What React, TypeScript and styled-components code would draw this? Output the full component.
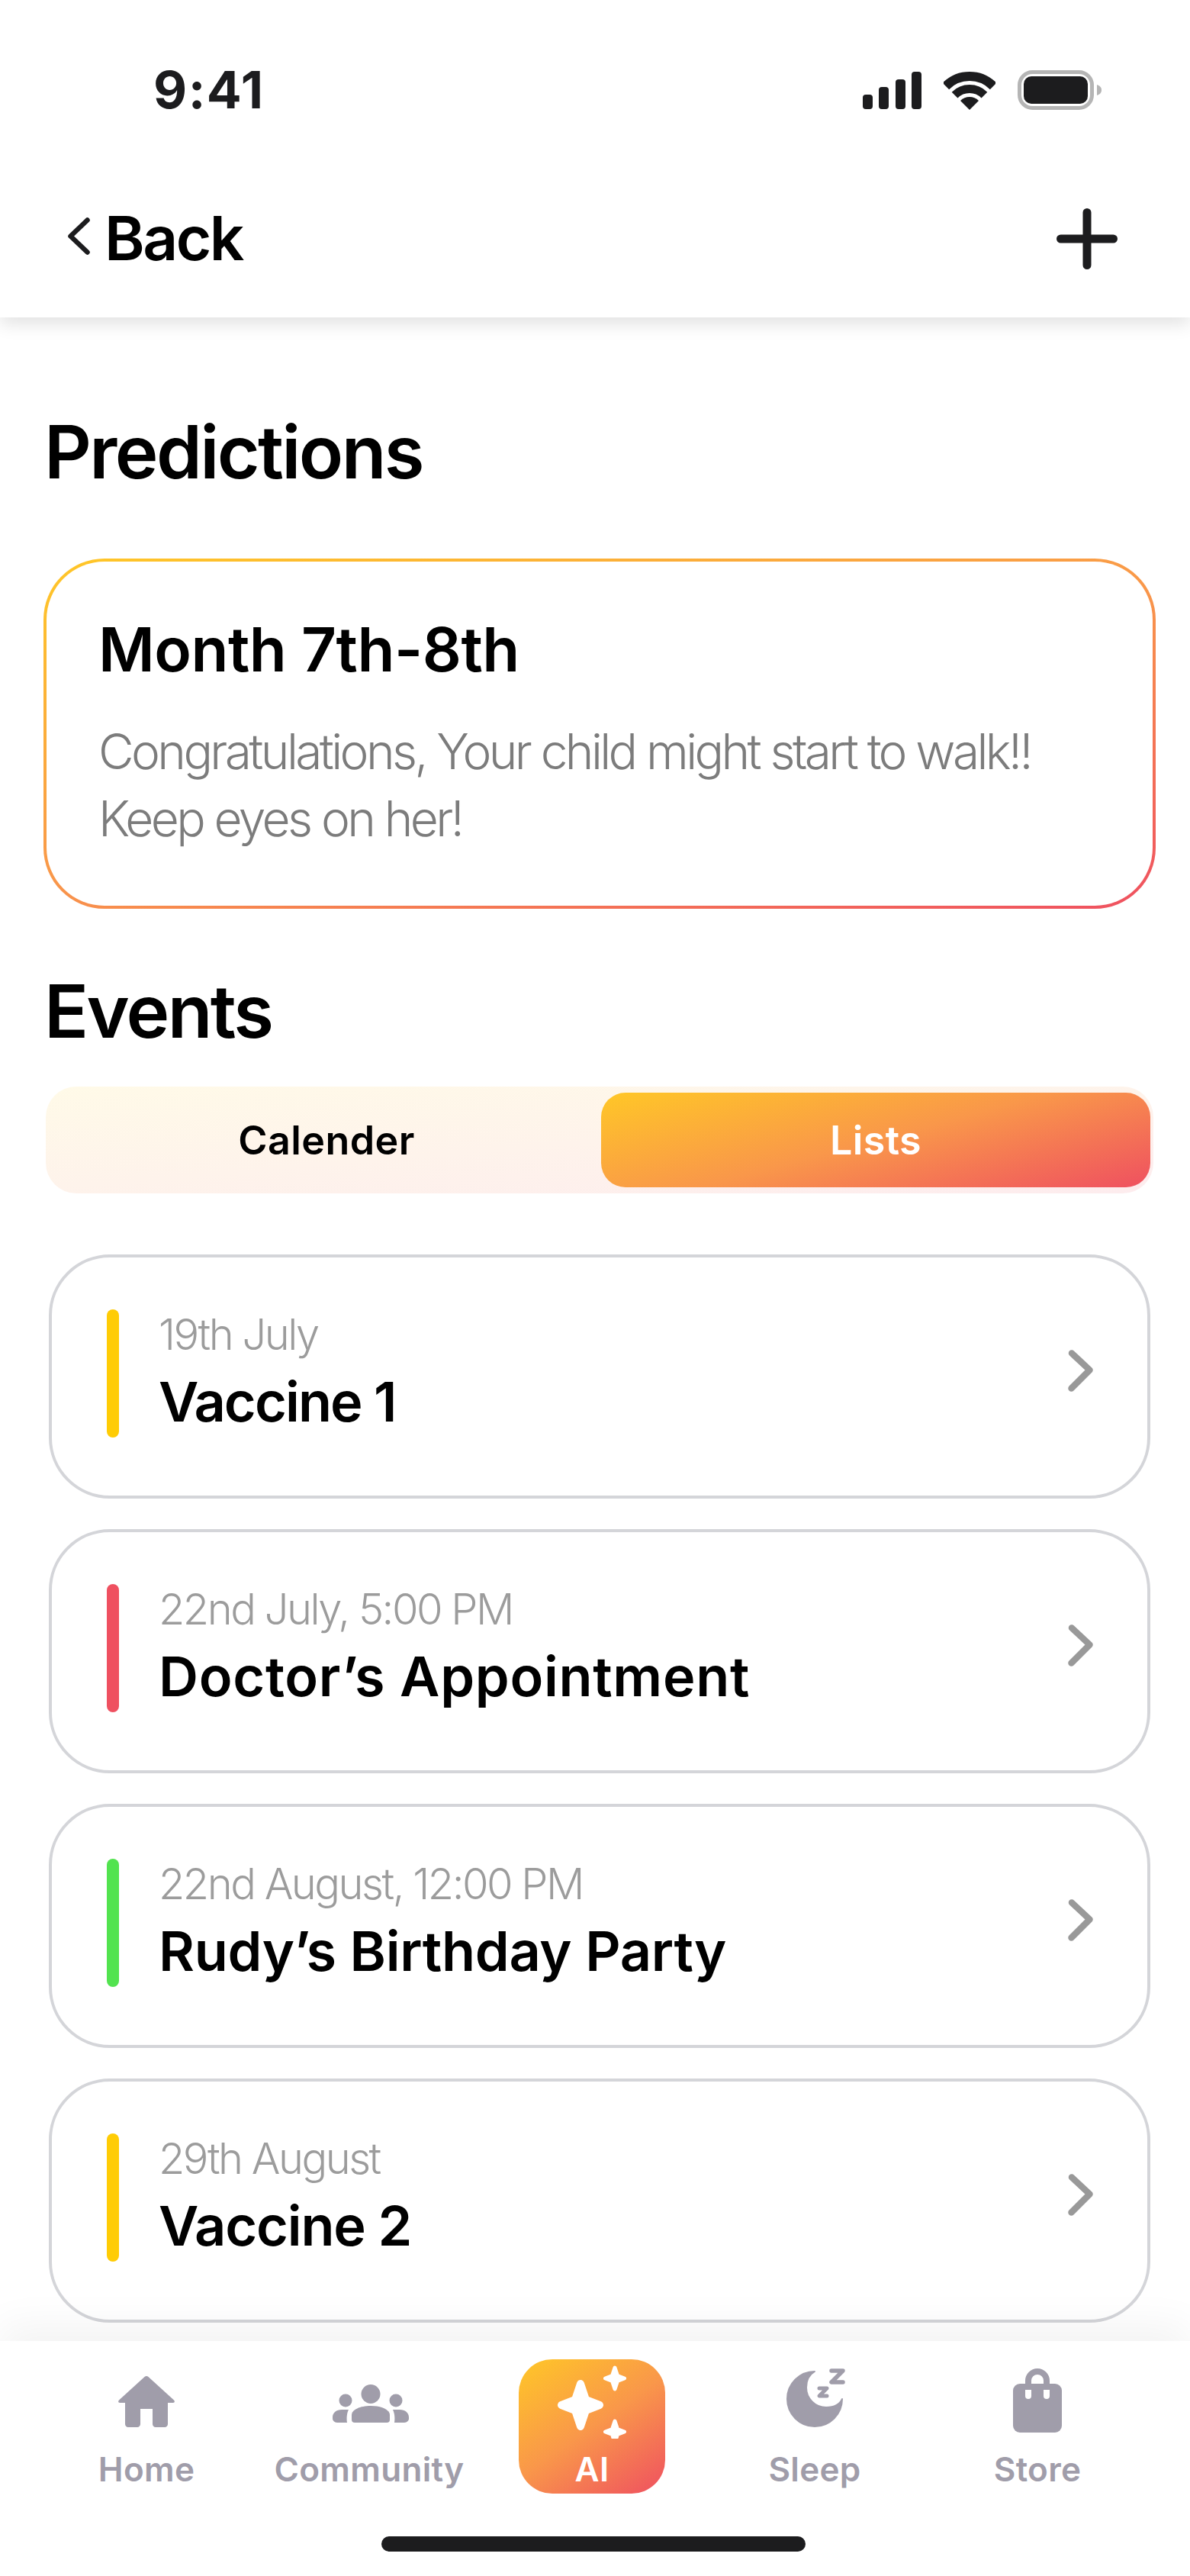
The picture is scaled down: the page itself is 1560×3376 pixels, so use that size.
import React from "react";
import styled, { createGlobalStyle } from "styled-components";

const GlobalStyle = createGlobalStyle`
  html, body { margin: 0; padding: 0; background: #fff; }
  body { font-family: Inter, "Liberation Sans", sans-serif; }
  * { box-sizing: border-box; }
`;

const GRADIENT = "linear-gradient(165deg, #ffc727 0%, #f9974a 50%, #ef5060 100%)";
const GRADIENT_SQUARE = "linear-gradient(145deg, #ffc727 0%, #f9974a 50%, #ef5060 100%)";

const Page = styled.div`
  width: 1560px;
  height: 3376px;
  overflow: hidden;
  background: #fff;
  display: flex;
  flex-direction: column;
  font-family: Inter, "Liberation Sans", sans-serif;
  color: #000;
`;

const Header = styled.header`
  height: 416px;
  flex: none;
  background: #fff;
  box-shadow: 0 8px 22px rgba(0, 0, 0, 0.12);
`;

const StatusBar = styled.div`
  height: 176px;
  padding: 92px 116px 0 201px;
  display: flex;
  justify-content: space-between;
  align-items: flex-start;
`;

const Time = styled.span`
  font-size: 68px;
  font-weight: 700;
  line-height: 50px;
  letter-spacing: 1.5px;
  color: #1c1c1e;
`;

const StatusIcons = styled.div`
  display: flex;
  gap: 29px;
  align-items: flex-start;
`;

const NavRow = styled.div`
  height: 240px;
  padding: 34px 95px 0 89px;
  display: flex;
  justify-content: space-between;
  align-items: center;
`;

const BackLink = styled.div`
  display: flex;
  align-items: center;
  gap: 19px;
  padding-bottom: 3px;
  font-size: 80px;
  font-weight: 600;
  line-height: 96px;
  letter-spacing: -2.5px;
  svg { margin-bottom: 5px; }
`;

const Main = styled.main`
  flex: 1;
  padding: 118px 45px 0 57px;
`;

const SectionTitle = styled.h2<{ $gap: number }>`
  margin: ${(p) => p.$gap}px 0 0 1px;
  font-size: 96px;
  font-weight: 600;
  line-height: 116px;
  letter-spacing: -2.6px;
`;

const PredictionCard = styled.section`
  height: 459px;
  margin-top: 82px;
  padding: 67px 40px 0 68px;
  border: 4px solid transparent;
  border-radius: 80px;
  background: linear-gradient(#fff, #fff) padding-box, ${GRADIENT} border-box;
`;

const CardTitle = styled.h3`
  margin: 0;
  font-size: 80px;
  font-weight: 600;
  line-height: 96px;
  letter-spacing: -0.5px;
`;

const CardText = styled.p`
  margin: 42px 0 0;
  font-size: 64px;
  font-weight: 300;
  line-height: 88px;
  letter-spacing: -3.6px;
  color: #7c7c7c;
`;

const Segment = styled.div`
  height: 140px;
  margin: 41px 3px 0;
  padding: 8px 4px 8px 8px;
  border-radius: 40px;
  background: linear-gradient(175deg, #fffae8, #fdecee);
  display: grid;
  grid-template-columns: 1fr 1fr;
`;

const SegmentTab = styled.div<{ $active?: boolean }>`
  display: flex;
  align-items: center;
  justify-content: center;
  border-radius: 32px;
  font-size: 52px;
  font-weight: 600;
  letter-spacing: 0.4px;
  color: ${(p) => (p.$active ? "#fff" : "#000")};
  background: ${(p) => (p.$active ? GRADIENT : "transparent")};
`;

const EventList = styled.div`
  margin: 80px 7px 0;
  display: flex;
  flex-direction: column;
  gap: 40px;
`;

const EventRow = styled.article`
  height: 320px;
  padding: 0 71px 0 72px;
  border: 4px solid #d4d5d9;
  border-radius: 80px;
  display: flex;
  align-items: center;
  svg { margin: 0 0 16px auto; }
`;

const EventBar = styled.div<{ $color: string }>`
  width: 16px;
  height: 168px;
  margin: 0 52px 8px 0;
  border-radius: 8px;
  background: ${(p) => p.$color};
  flex: none;
`;

const EventText = styled.div`
  padding-bottom: 13px;
  display: flex;
  flex-direction: column;
`;

const EventDate = styled.span`
  font-size: 56px;
  font-weight: 300;
  line-height: 68px;
  letter-spacing: -2.5px;
  color: #9c9c9c;
`;

const EventName = styled.span<{ $tracking: number }>`
  margin-top: 10px;
  font-size: 72px;
  font-weight: 600;
  line-height: 88px;
  letter-spacing: ${(p) => p.$tracking}px;
`;

const TabBar = styled.nav`
  height: 308px;
  flex: none;
  padding-top: 24px;
  background: #fff;
  box-shadow: 0 -20px 50px rgba(0, 0, 0, 0.05);
`;

const TabGrid = styled.div`
  height: 176px;
  padding: 0 54px 0 46px;
  display: grid;
  grid-template-columns: repeat(5, 292px);
`;

const Tab = styled.div<{ $active?: boolean }>`
  justify-self: center;
  width: ${(p) => (p.$active ? "192px" : "292px")};
  height: 176px;
  padding-top: 4px;
  border-radius: 44px;
  display: flex;
  flex-direction: column;
  align-items: center;
  background: ${(p) => (p.$active ? GRADIENT_SQUARE : "transparent")};
  color: ${(p) => (p.$active ? "#fff" : "#a09daa")};
`;

const TabLabel = styled.span`
  margin-top: 14px;
  font-size: 44px;
  font-weight: 600;
  line-height: 52px;
  letter-spacing: 0.3px;
`;

const HomeIndicator = styled.div`
  width: 556px;
  height: 20px;
  margin: 56px 0 0 500px;
  border-radius: 10px;
  background: #1c1c1e;
`;

const SignalIcon = () => (
  <svg width="77" height="52" viewBox="0 0 77 52" fill="#1c1c1e">
    <rect x="0" y="32" width="13" height="19" rx="4" />
    <rect x="21" y="22" width="13" height="29" rx="4" />
    <rect x="43" y="12" width="13" height="39" rx="4" />
    <rect x="64" y="2" width="13" height="49" rx="4" />
  </svg>
);

const WifiIcon = () => (
  <svg width="68" height="52" viewBox="0 0 68 52" fill="none">
    <g transform="translate(0 2)">
      <path d="M2.9 18.9A44 44 0 0 1 65.1 18.9" stroke="#1c1c1e" strokeWidth="12" />
      <path d="M14.6 30.6A27.5 27.5 0 0 1 53.4 30.6" stroke="#1c1c1e" strokeWidth="11" />
      <path d="M34 50L22 38A17 17 0 0 1 46 38Z" fill="#1c1c1e" />
    </g>
  </svg>
);

const BatteryIcon = () => (
  <svg width="110" height="52" viewBox="0 0 110 52">
    <rect x="2.5" y="2.5" width="95" height="47" rx="17" fill="none" stroke="#b5b5b5" strokeWidth="5" />
    <rect x="8" y="8" width="84" height="36" rx="10" fill="#1c1c1e" />
    <path d="M104 19c3 1 6 3 6 7s-3 6-6 7z" fill="#b5b5b5" />
  </svg>
);

const ChevronLeft = () => (
  <svg width="29" height="49" viewBox="0 0 29 49" fill="none" stroke="#1c1c1e" strokeWidth="6.5" strokeLinecap="round" strokeLinejoin="round">
    <path d="M25.5 3.5L3.5 24.5L25.5 45.5" />
  </svg>
);

const PlusIcon = () => (
  <svg width="80" height="80" viewBox="0 0 80 80" fill="none" stroke="#1c1c1e" strokeWidth="11" strokeLinecap="round">
    <path d="M40 5.5V74.5M5.5 40H74.5" />
  </svg>
);

const ChevronRight = () => (
  <svg width="33" height="55" viewBox="0 0 33 55" fill="none" stroke="#999" strokeWidth="8.5" strokeLinecap="round" strokeLinejoin="round">
    <path d="M5 4.500L28.500 26.500L4.500 50.500" />
  </svg>
);

const HomeIcon = () => (
  <svg width="74" height="100" viewBox="0 0 74 100" fill="currentColor">
    <g transform="translate(0 18)">
      <path d="M34.500 1L1 31.500C-.6 33 .2 35 2 35H9V63C9 65.200 10.800 67 13 67H25C27.200 67 29 65.200 29 63V43H45V63C45 65.200 46.800 67 49 67H61C63.200 67 65 65.200 65 63V35H72C73.800 35 74.600 33 73 31.500L39.500 1C38 -.3 36 -.3 34.500 1Z" />
    </g>
  </svg>
);

const CommunityIcon = () => (
  <svg width="104" height="100" viewBox="0 0 104 100" fill="currentColor">
    <g transform="translate(4 29)">
      <circle cx="50" cy="12.500" r="12.500" />
      <circle cx="17" cy="21" r="8.500" />
      <circle cx="83" cy="21" r="8.500" />
      <path d="M29 50A4 4 0 0 1 25 46V40C25 33 36 28 50 28S75 33 75 40V46A4 4 0 0 1 71 50Z" />
      <path d="M0 43C0 37 5 33 12 33H21C19 37 18 43 19 50H6A6 6 0 0 1 0 43Z" />
      <path d="M100 43C100 37 95 33 88 33H79C81 37 82 43 81 50H94A6 6 0 0 0 100 43Z" />
    </g>
  </svg>
);

const Sparkle = ({ cx, cy, a, b, w, s }: { cx: number; cy: number; a: number; b: number; w: number; s: number }) => (
  <path
    transform={`translate(${cx} ${cy})`}
    d={`M0 ${-b}L${w} ${-w}L${a} 0L${w} ${w}L0 ${b}L${-w} ${w}L${-a} 0L${-w} ${-w}Z`}
    fill="#fff"
    stroke="#fff"
    strokeWidth={s}
    strokeLinejoin="round"
  />
);

const AiIcon = () => (
  <svg width="120" height="100" viewBox="0 0 120 100">
    <Sparkle cx={45} cy={56} a={25} b={28} w={7} s={10} />
    <Sparkle cx={90} cy={21} a={12.500} b={14} w={3.500} s={5} />
    <Sparkle cx={90} cy={91} a={12.500} b={14} w={3.500} s={5} />
  </svg>
);

const SleepIcon = () => (
  <svg width="80" height="100" viewBox="0 0 80 100" fill="none">
    <g transform="translate(3 8)">
      <path
        d="M37 4A36 36 0 1 0 73 40C70 47 62 51 52 51A26 26 0 0 1 26 25C26 16 30 8 37 4Z"
        fill="currentColor"
        stroke="currentColor"
        strokeWidth="2"
        strokeLinejoin="round"
      />
      <path d="M59 3H74L59 18H74" stroke="currentColor" strokeWidth="5.500" strokeLinecap="round" strokeLinejoin="round" />
      <path d="M43 26H53L43 36H53" stroke="currentColor" strokeWidth="5" strokeLinecap="round" strokeLinejoin="round" />
    </g>
  </svg>
);

const StoreIcon = () => (
  <svg width="64" height="100" viewBox="0 0 64 100" fill="none">
    <g transform="translate(0 12)">
      <path d="M20 20V12A12 12 0 0 1 44 12V20" stroke="currentColor" strokeWidth="8" />
      <rect x="0" y="16" width="64" height="64" rx="9" fill="currentColor" />
      <path d="M16 24H24V32A4 4 0 0 1 16 32Z" fill="#fff" />
      <path d="M40 24H48V32A4 4 0 0 1 40 32Z" fill="#fff" />
    </g>
  </svg>
);

const events = [
  { date: "19th July", name: "Vaccine 1", color: "#ffcc05", tracking: -1.9 },
  { date: "22nd July, 5:00 PM", name: "Doctor’s Appointment", color: "#ef5060", tracking: 0.7 },
  { date: "22nd August, 12:00 PM", name: "Rudy’s Birthday Party", color: "#52e34f", tracking: -0.3 },
  { date: "29th August", name: "Vaccine 2", color: "#ffcc05", tracking: -1.2 },
];

const tabs = [
  { label: "Home", icon: <HomeIcon /> },
  { label: "Community", icon: <CommunityIcon /> },
  { label: "AI", icon: <AiIcon />, active: true },
  { label: "Sleep", icon: <SleepIcon /> },
  { label: "Store", icon: <StoreIcon /> },
];

export default function App() {
  return (
    <Page>
      <GlobalStyle />
      <Header>
        <StatusBar>
          <Time>9:41</Time>
          <StatusIcons>
            <SignalIcon />
            <WifiIcon />
            <BatteryIcon />
          </StatusIcons>
        </StatusBar>
        <NavRow>
          <BackLink>
            <ChevronLeft />
            Back
          </BackLink>
          <PlusIcon />
        </NavRow>
      </Header>
      <Main>
        <SectionTitle $gap={0}>Predictions</SectionTitle>
        <PredictionCard>
          <CardTitle>Month 7th-8th</CardTitle>
          <CardText>
            Congratulations, Your child might start to walk!!
            <br />
            Keep eyes on her!
          </CardText>
        </PredictionCard>
        <SectionTitle $gap={76}>Events</SectionTitle>
        <Segment>
          <SegmentTab>Calender</SegmentTab>
          <SegmentTab $active>Lists</SegmentTab>
        </Segment>
        <EventList>
          {events.map((e) => (
            <EventRow key={e.name}>
              <EventBar $color={e.color} />
              <EventText>
                <EventDate>{e.date}</EventDate>
                <EventName $tracking={e.tracking}>{e.name}</EventName>
              </EventText>
              <ChevronRight />
            </EventRow>
          ))}
        </EventList>
      </Main>
      <TabBar>
        <TabGrid>
          {tabs.map((t) => (
            <Tab key={t.label} $active={t.active}>
              {t.icon}
              <TabLabel>{t.label}</TabLabel>
            </Tab>
          ))}
        </TabGrid>
        <HomeIndicator />
      </TabBar>
    </Page>
  );
}
